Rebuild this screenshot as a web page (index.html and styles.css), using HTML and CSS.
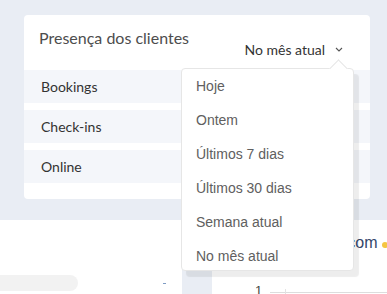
FILE: index.html
```html
<!DOCTYPE html>
<html lang="pt">
<head>
<meta charset="utf-8">
<link rel="stylesheet" href="styles.css">
</head>
<body>
<div class="page">
  <section class="top">
    <div class="card">
      <div class="card-head">
        <h2 class="title">Presença dos clientes</h2>
        <div class="period">
          <span>No mês atual</span>
          <svg class="chev" width="8" height="5" viewBox="0 0 8 5"><path d="M1 1 L4 4 L7 1" fill="none" stroke="#555" stroke-width="1.1"/></svg>
        </div>
      </div>
      <div class="rows">
        <div class="row">Bookings</div>
        <div class="row">Check-ins</div>
        <div class="row">Online</div>
      </div>
    </div>
  </section>
  <section class="bottom">
    <div class="bcard left">
      <div class="lrow">
        <div class="pill"></div>
        <div class="dash"></div>
      </div>
    </div>
    <div class="bcard right">
      <div class="rtitle"><span class="rtext">Clientes com</span><span class="dot"></span></div>
      <div class="axis">
        <span class="tick">1</span>
        <span class="tline"></span>
        <span class="grid"></span>
      </div>
    </div>
  </section>
  <ul class="menu">
    <li>Hoje</li>
    <li>Ontem</li>
    <li>Últimos 7 dias</li>
    <li>Últimos 30 dias</li>
    <li>Semana atual</li>
    <li>No mês atual</li>
  </ul>
</div>
</body>
</html>
```
FILE: styles.css
```css
* { box-sizing: border-box; }
html, body { margin: 0; padding: 0; }
body {
  width: 387px;
  height: 294px;
  overflow: hidden;
  background: #e9edf4;
  font-family: Lato, "Liberation Sans", sans-serif;
}
.page { position: relative; width: 387px; height: 294px; }
.top { padding: 15px 17px 21px 24px; }
.card {
  background: #fff;
  border-radius: 4px;
  height: 184px;
  padding-bottom: 16px;
}
.card-head {
  height: 55px;
  display: flex;
  justify-content: space-between;
  padding: 0 0 0 15px;
}
.title {
  margin: 0;
  padding-top: 13px;
  font-size: 16px;
  font-weight: 400;
  color: #4d4d4d;
  line-height: 20px;
}
.period {
  display: flex;
  align-items: center;
  gap: 10px;
  padding: 20px 27px 0 0;
  height: 48px;
  font-size: 14px;
  color: #333;
}
.chev { margin-top: 1px; }
.rows { display: flex; flex-direction: column; gap: 7px; }
.row {
  height: 33px;
  background: #f4f6fa;
  padding-left: 17px;
  display: flex;
  align-items: center;
  font-size: 14px;
  color: #333;
}
.bottom {
  display: flex;
  gap: 30px;
  height: 74px;
}
.bcard { background: #fff; }
.left { width: 182px; padding-top: 55px; }
.lrow { display: flex; align-items: center; justify-content: space-between; padding-right: 16px; }
.pill { width: 78px; height: 16px; background: #f2f2f2; border-radius: 0 8px 8px 0; }
.dash { width: 3px; height: 1px; background: #7f9cc4; margin-top: 1px; }
.right { flex: 1; position: relative; overflow: hidden; }
.rtitle {
  white-space: nowrap;
  padding: 10px 0 0 73px;
  font-family: "Liberation Sans", Arial, sans-serif;
  font-size: 16px;
  color: #34476a;
  height: 36px;
  display: flex;
  align-items: center;
  gap: 5px;
}
.dot { width: 6px; height: 6px; border-radius: 50%; background: #f5c542; flex: none; margin-top: 4px; }
.axis { display: flex; align-items: flex-end; padding: 25px 0 0 43px; height: 38px; position: relative; }
.tick {
  font-family: "Liberation Sans", Arial, sans-serif;
  font-size: 13px;
  color: #444;
  line-height: 13px;
  margin-bottom: -3px;
}
.tline { width: 117px; height: 1px; background: #ddd; margin: 0 0 1px 8px; }
.grid { position: absolute; left: 73px; top: 33px; width: 1px; height: 10px; background: #e3e3e3; }
.menu {
  position: absolute;
  left: 181px;
  top: 68px;
  width: 173px;
  height: 203px;
  margin: 0;
  padding: 0;
  list-style: none;
  background: #fff;
  border: 1px solid #e6e6e6;
  border-radius: 4px;
  box-shadow: 5px 6px 1px rgba(0,0,0,0.07);
  font-family: "Liberation Sans", Arial, sans-serif;
  font-size: 14px;
  color: #606060;
}
.menu::before {
  content: "";
  position: absolute;
  left: 150px;
  top: -7px;
  width: 12px;
  height: 12px;
  background: #fff;
  border-left: 1px solid #e6e6e6;
  border-top: 1px solid #e6e6e6;
  transform: rotate(45deg);
}
.menu li {
  height: 34px;
  display: flex;
  align-items: center;
  padding-left: 14px;
  position: relative;
}
```
